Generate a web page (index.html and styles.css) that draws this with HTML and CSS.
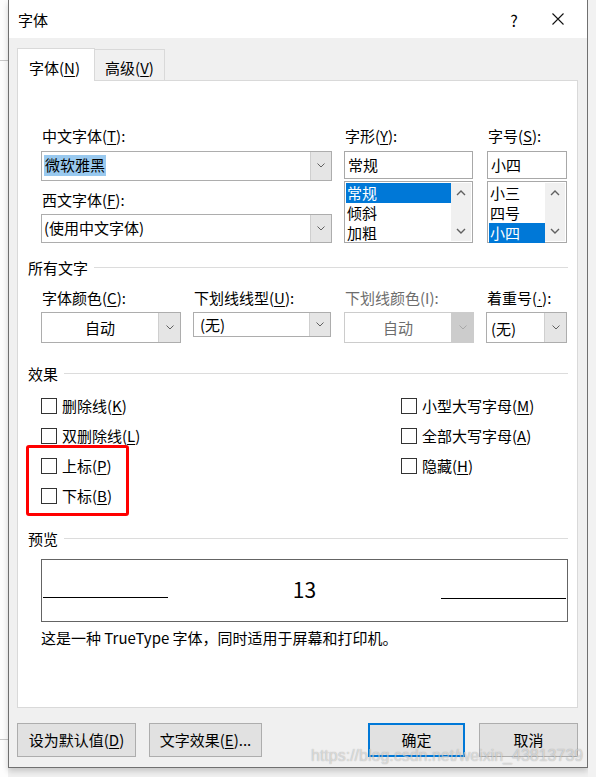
FILE: index.html
```html
<!DOCTYPE html>
<html lang="zh-CN">
<head>
<meta charset="utf-8">
<title>字体</title>
<link rel="stylesheet" href="styles.css">
</head>
<body>
<div class="screen">
  <div class="strip-left"><span class="bg-line top"></span><span class="bg-line bottom"></span></div>
  <div class="dialog">
    <div class="titlebar">
      <span class="title">字体</span>
      <span class="help">?</span>
      <span class="close"><svg width="12" height="12" viewBox="0 0 12 12"><path d="M0.5 0.5 L11.5 11.5 M11.5 0.5 L0.5 11.5" stroke="#111" stroke-width="1.1" fill="none"/></svg></span>
    </div>
    <div class="body">
      <div class="tabs">
        <div class="tab active">字体(<u>N</u>)</div>
        <div class="tab">高级(<u>V</u>)</div>
      </div>
      <div class="panel">
        <div class="font-row">
          <div class="col col-face">
            <div class="label">中文字体(<u>T</u>):</div>
            <div class="combo combo-face"><span class="combo-text"><span class="sel">微软雅黑</span></span><span class="combo-btn"><svg width="8" height="5" viewBox="0 0 8 5"><path d="M0.5 0.5 L4 4 L7.5 0.5" stroke="#606060" fill="none"/></svg></span></div>
            <div class="label label-second">西文字体(<u>F</u>):</div>
            <div class="combo combo-face second"><span class="combo-text">(使用中文字体)</span><span class="combo-btn"><svg width="8" height="5" viewBox="0 0 8 5"><path d="M0.5 0.5 L4 4 L7.5 0.5" stroke="#606060" fill="none"/></svg></span></div>
          </div>
          <div class="col col-style">
            <div class="label">字形(<u>Y</u>):</div>
            <div class="textbox">常规</div>
            <div class="listbox">
              <div class="items">
                <div class="item selected">常规</div>
                <div class="item">倾斜</div>
                <div class="item">加粗</div>
              </div>
              <div class="scrollbar">
                <span class="arrow"><svg width="10" height="6" viewBox="0 0 10 6"><path d="M1 5 L5 1 L9 5" stroke="#606060" stroke-width="1.4" fill="none"/></svg></span>
                <span class="arrow"><svg width="10" height="6" viewBox="0 0 10 6"><path d="M1 1 L5 5 L9 1" stroke="#606060" stroke-width="1.4" fill="none"/></svg></span>
              </div>
            </div>
          </div>
          <div class="col col-size">
            <div class="label">字号(<u>S</u>):</div>
            <div class="textbox">小四</div>
            <div class="listbox">
              <div class="items">
                <div class="item">小三</div>
                <div class="item">四号</div>
                <div class="item selected">小四</div>
              </div>
              <div class="scrollbar">
                <span class="arrow"><svg width="10" height="6" viewBox="0 0 10 6"><path d="M1 5 L5 1 L9 5" stroke="#606060" stroke-width="1.4" fill="none"/></svg></span>
                <span class="arrow"><svg width="10" height="6" viewBox="0 0 10 6"><path d="M1 1 L5 5 L9 1" stroke="#606060" stroke-width="1.4" fill="none"/></svg></span>
              </div>
            </div>
          </div>
        </div>

        <div class="section-head head-all"><span class="head-text">所有文字</span><span class="rule"></span></div>

        <div class="attr-row">
          <div class="field f-color">
            <div class="label">字体颜色(<u>C</u>):</div>
            <div class="combo combo-attr"><span class="combo-text centered">自动</span><span class="combo-btn"><svg width="8" height="5" viewBox="0 0 8 5"><path d="M0.5 0.5 L4 4 L7.5 0.5" stroke="#606060" fill="none"/></svg></span></div>
          </div>
          <div class="field f-uline">
            <div class="label">下划线线型(<u>U</u>):</div>
            <div class="combo combo-short"><span class="combo-text">(无)</span><span class="combo-btn"><svg width="8" height="5" viewBox="0 0 8 5"><path d="M0.5 0.5 L4 4 L7.5 0.5" stroke="#606060" fill="none"/></svg></span></div>
          </div>
          <div class="field f-ucolor">
            <div class="label disabled-text">下划线颜色(I):</div>
            <div class="combo combo-attr disabled"><span class="combo-text centered">自动</span><span class="combo-btn"><svg width="8" height="5" viewBox="0 0 8 5"><path d="M0.5 0.5 L4 4 L7.5 0.5" stroke="#a8a8a8" fill="none"/></svg></span></div>
          </div>
          <div class="field f-emph">
            <div class="label">着重号(<u class="dot">·</u>):</div>
            <div class="combo combo-attr emph"><span class="combo-text">(无)</span><span class="combo-btn"><svg width="8" height="5" viewBox="0 0 8 5"><path d="M0.5 0.5 L4 4 L7.5 0.5" stroke="#606060" fill="none"/></svg></span></div>
          </div>
        </div>

        <div class="section-head head-fx"><span class="head-text">效果</span><span class="rule"></span></div>

        <div class="effects">
          <div class="fx-col fx-left">
            <div class="check"><span class="box"></span><span>删除线(<u>K</u>)</span></div>
            <div class="check"><span class="box"></span><span>双删除线(<u>L</u>)</span></div>
            <div class="marked">
              <div class="check"><span class="box"></span><span>上标(<u>P</u>)</span></div>
              <div class="check"><span class="box"></span><span>下标(<u>B</u>)</span></div>
            </div>
          </div>
          <div class="fx-col fx-right">
            <div class="check"><span class="box"></span><span>小型大写字母(<u>M</u>)</span></div>
            <div class="check"><span class="box"></span><span>全部大写字母(<u>A</u>)</span></div>
            <div class="check"><span class="box"></span><span>隐藏(<u>H</u>)</span></div>
          </div>
        </div>

        <div class="section-head head-pv"><span class="head-text">预览</span><span class="rule"></span></div>

        <div class="preview">
          <span class="pv-line"></span>
          <span class="pv-text">13</span>
          <span class="pv-line"></span>
        </div>
        <div class="desc">这是一种 TrueType 字体，同时适用于屏幕和打印机。</div>
      </div>

      <div class="buttons">
        <div class="btn b-default">设为默认值(<u>D</u>)</div>
        <div class="btn b-effects">文字效果(<u>E</u>)...</div>
        <div class="btn b-ok">确定</div>
        <div class="btn b-cancel">取消</div>
      </div>
    </div>
  </div>
  <div class="strip-right"></div>
  <div class="watermark">https://blog.csdn.net/weixin_43813739</div>
</div>
</body>
</html>
```
FILE: styles.css
```css
*, *::before, *::after { box-sizing: border-box; }

body {
  margin: 0;
  width: 596px;
  height: 777px;
  overflow: hidden;
  background: #f0f0f0;
  font-family: "Noto Sans CJK SC", "Noto Sans", sans-serif;
  font-size: 15px;
  line-height: 18px;
  color: #000;
}

u { text-decoration: underline; text-underline-offset: 2px; text-decoration-thickness: 1px; }
u.dot { font-family: "Liberation Sans", sans-serif; }

.screen {
  display: flex;
  height: 777px;
  position: relative;
}

.strip-left {
  width: 8px;
  height: 777px;
  background: #fdfdfd;
  display: flex;
  flex-direction: column;
}
.bg-line { display: block; height: 1px; background: #c8c8c8; }
.bg-line.top { margin-top: 60px; }
.bg-line.bottom { margin-top: 678px; }

.dialog {
  width: 580px;
  height: 768px;
  border: 1px solid #707070;
  border-top: none;
  background: #f0f0f0;
  display: flex;
  flex-direction: column;
  box-shadow: 0 3px 6px rgba(0, 0, 0, 0.18);
}

.strip-right { flex: 1; background: #f2f2f2; }

/* title bar */
.titlebar {
  height: 38px;
  background: #fff;
  display: flex;
  align-items: center;
  padding-left: 9px;
  padding-right: 6px;
}
.title { flex: 1; padding-top: 2px; }
.help { width: 30px; text-align: center; font-size: 16px; padding-top: 1px; }
.close { width: 46px; display: flex; justify-content: center; align-items: center; margin-left: 6px; }

/* body */
.body {
  flex: 1;
  display: flex;
  flex-direction: column;
  padding: 10px 9px 10px 8px;
}

.tabs { display: flex; height: 33px; align-items: flex-end; }
.tab {
  height: 31px;
  padding: 5px 0 0;
  text-align: center;
  border: 1px solid #d9d9d9;
  border-bottom: none;
  background: #f0f0f0;
}
.tab.active {
  width: 78px;
  height: 33px;
  padding-top: 10px;
  background: #fff;
  position: relative;
  z-index: 1;
  padding-right: 3px;
}
.tab:not(.active) { width: 70px; border-left: none; padding-top: 9px; height: 31px; margin-bottom: 1px; }

.panel {
  width: 561px;
  height: 628px;
  margin-top: -1px;
  border: 1px solid #d9d9d9;
  background: #fff;
  padding: 46px 9px 0 10px;
}

.label { height: 18px; white-space: nowrap; padding-left: 1px; }
.disabled-text { color: #6d6d6d; }

/* font row */
.font-row { display: flex; margin-left: 13px; height: 116px; }
.col { display: flex; flex-direction: column; }
.col-face { width: 291px; }
.col-style { width: 129px; margin-left: 12px; }
.col-size { width: 80px; margin-left: 14px; }

.combo {
  display: flex;
  border: 1px solid #adadad;
  background: #fff;
}
.combo-text {
  flex: 1;
  display: flex;
  align-items: center;
  padding-left: 2px;
  white-space: nowrap;
}
.combo-text.centered { justify-content: center; padding-left: 0; }
.combo-btn {
  width: 21px;
  background: #e5e5e5;
  border-left: 1px solid #cfcfcf;
  display: flex;
  align-items: center;
  justify-content: center;
}
.combo-face { height: 30px; margin-top: 6px; }
.combo-face.second { margin-top: 5px; }
.label-second { margin-top: 10px; }
.sel { background: #99c9ef; padding: 1px 1px 2px; }

.textbox {
  height: 28px;
  margin-top: 6px;
  border: 1px solid #a8a8a8;
  padding: 4px 0 0 3px;
}
.listbox {
  height: 62px;
  margin-top: 2px;
  border: 1px solid #a8a8a8;
  padding: 1px;
  display: flex;
}
.items { flex: 1; }
.item { height: 20px; line-height: 20px; padding-left: 1px; }
.item.selected { background: #0078d7; color: #fff; }
.scrollbar {
  width: 20px;
  background: #f0f0f0;
  display: flex;
  flex-direction: column;
  justify-content: space-between;
}
.arrow { height: 20px; display: flex; align-items: center; justify-content: center; }

/* section heads */
.section-head { display: flex; align-items: center; height: 18px; }
.head-text { white-space: nowrap; }
.rule { flex: 1; height: 1px; background: #dcdcdc; margin-left: 6px; margin-top: -1px; }
.head-all { margin-top: 16px; }
.head-fx { margin-top: 22px; }
.head-pv { margin-top: 19px; }

/* attribute row */
.attr-row { display: flex; margin-left: 13px; margin-top: 12px; height: 54px; }
.field { display: flex; flex-direction: column; }
.f-color { width: 140px; }
.f-uline { width: 138px; margin-left: 12px; }
.f-ucolor { width: 130px; margin-left: 13px; }
.f-emph { width: 81px; margin-left: 12px; }
.combo-attr { height: 31px; margin-top: 5px; }
.combo-attr .combo-btn { width: 22px; }
.combo-short { height: 25px; margin-top: 5px; }
.combo-short .combo-text { padding-left: 6px; }
.emph .combo-text { padding-left: 4px; padding-top: 2px; }
.combo.disabled { border-color: #cccccc; }
.combo.disabled .combo-text { color: #6d6d6d; }
.combo.disabled .combo-btn { background: #cccccc; border-left-color: #cccccc; }

/* effects */
.effects { display: flex; margin-left: 13px; margin-top: 8px; height: 120px; }
.fx-col { display: flex; flex-direction: column; }
.fx-left { width: 360px; }
.check { height: 30px; display: flex; align-items: center; white-space: nowrap; }
.box {
  width: 16px;
  height: 16px;
  border: 1px solid #333;
  background: #fff;
  margin-right: 5px;
}
.marked { position: relative; }
.marked::after {
  content: "";
  position: absolute;
  left: -15px;
  top: -6px;
  width: 103px;
  height: 71px;
  border: 3px solid #ff0000;
  border-radius: 3px;
}

/* preview */
.preview {
  margin-left: 13px;
  margin-top: 11px;
  width: 527px;
  height: 63px;
  border: 1px solid #646464;
  display: flex;
  align-items: center;
  justify-content: space-between;
  padding: 0 1px;
}
.pv-line { width: 125px; height: 1px; background: #000; margin-top: 14px; }
.pv-line + .pv-text + .pv-line { margin-top: 16px; }
.pv-text { font-size: 21px; line-height: 24px; margin-top: -3px; }
.desc { margin-left: 13px; margin-top: 7px; white-space: nowrap; }

/* buttons */
.buttons { display: flex; margin-top: 15px; height: 34px; }
.btn {
  height: 34px;
  background: #e1e1e1;
  border: 1px solid #adadad;
  display: flex;
  align-items: center;
  justify-content: center;
  white-space: nowrap;
}
.b-default { width: 119px; }
.b-effects { width: 113px; margin-left: 13px; }
.b-ok { width: 97px; margin-left: auto; border: 2px solid #0078d7; }
.b-cancel { width: 99px; margin-left: 14px; }

.watermark {
  position: absolute;
  left: 311px;
  top: 746px;
  font-family: "Liberation Sans", Arial, sans-serif;
  font-size: 16px;
  line-height: 20px;
  color: rgba(255, 255, 255, 0.55);
  text-shadow: 0 0 1px rgba(0, 0, 0, 0.35);
  white-space: nowrap;
}
```
